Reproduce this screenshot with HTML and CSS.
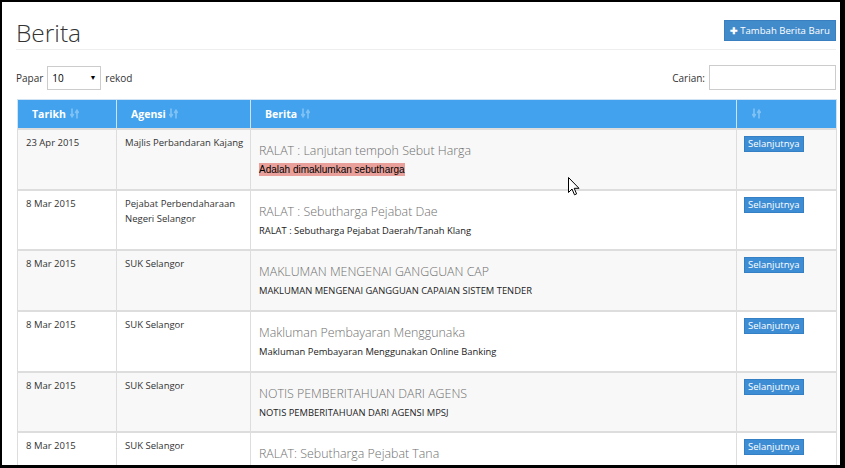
FILE: index.html
```html
<!DOCTYPE html>
<html>
<head>
<meta charset="utf-8">
<link rel="stylesheet" href="styles.css">
</head>
<body>
<div class="frame">
  <div class="page-header">
    <h1 class="title">Berita</h1>
    <button class="btn-add"><span class="plus">✚</span>Tambah Berita Baru</button>
  </div>
  <div class="toolbar">
    <label class="length">Papar <span class="select">10 <span class="caret">▼</span></span> rekod</label>
    <label class="search">Carian: <span class="input"></span></label>
  </div>
  <table class="grid">
    <colgroup>
      <col class="c1"><col class="c2"><col class="c3"><col class="c4">
    </colgroup>
    <thead>
      <tr>
        <th>Tarikh <svg class="sort" width="9" height="11" viewBox="0 0 9 11"><path d="M2 0.5v7.5M0.3 6l1.7 2.8 1.7-2.8M7 10.5v-7.5M5.3 5l1.7-2.8 1.7 2.8" fill="none" stroke="#80c2f4" stroke-width="1.6"/></svg></th>
        <th>Agensi <svg class="sort" width="9" height="11" viewBox="0 0 9 11"><path d="M2 0.5v7.5M0.3 6l1.7 2.8 1.7-2.8M7 10.5v-7.5M5.3 5l1.7-2.8 1.7 2.8" fill="none" stroke="#80c2f4" stroke-width="1.6"/></svg></th>
        <th>Berita <svg class="sort" width="9" height="11" viewBox="0 0 9 11"><path d="M2 0.5v7.5M0.3 6l1.7 2.8 1.7-2.8M7 10.5v-7.5M5.3 5l1.7-2.8 1.7 2.8" fill="none" stroke="#80c2f4" stroke-width="1.6"/></svg></th>
        <th><svg class="sort" width="9" height="11" viewBox="0 0 9 11"><path d="M2 0.5v7.5M0.3 6l1.7 2.8 1.7-2.8M7 10.5v-7.5M5.3 5l1.7-2.8 1.7 2.8" fill="none" stroke="#80c2f4" stroke-width="1.6"/></svg></th>
      </tr>
    </thead>
    <tbody>
      <tr class="odd">
        <td>23 Apr 2015</td>
        <td>Majlis Perbandaran Kajang</td>
        <td><div class="news-title">RALAT : Lanjutan tempoh Sebut Harga</div><div class="news-sub"><span class="hl">Adalah dimaklumkan sebutharga</span></div></td>
        <td class="act"><span class="btn-more">Selanjutnya</span></td>
      </tr>
      <tr>
        <td>8 Mar 2015</td>
        <td>Pejabat Perbendaharaan Negeri Selangor</td>
        <td><div class="news-title">RALAT : Sebutharga Pejabat Dae</div><div class="news-sub">RALAT : Sebutharga Pejabat Daerah/Tanah Klang</div></td>
        <td class="act"><span class="btn-more">Selanjutnya</span></td>
      </tr>
      <tr class="odd">
        <td>8 Mar 2015</td>
        <td>SUK Selangor</td>
        <td><div class="news-title">MAKLUMAN MENGENAI GANGGUAN CAP</div><div class="news-sub">MAKLUMAN MENGENAI GANGGUAN CAPAIAN SISTEM TENDER</div></td>
        <td class="act"><span class="btn-more">Selanjutnya</span></td>
      </tr>
      <tr>
        <td>8 Mar 2015</td>
        <td>SUK Selangor</td>
        <td><div class="news-title">Makluman Pembayaran Menggunaka</div><div class="news-sub">Makluman Pembayaran Menggunakan Online Banking</div></td>
        <td class="act"><span class="btn-more">Selanjutnya</span></td>
      </tr>
      <tr class="odd">
        <td>8 Mar 2015</td>
        <td>SUK Selangor</td>
        <td><div class="news-title">NOTIS PEMBERITAHUAN DARI AGENS</div><div class="news-sub">NOTIS PEMBERITAHUAN DARI AGENSI MPSJ</div></td>
        <td class="act"><span class="btn-more">Selanjutnya</span></td>
      </tr>
      <tr>
        <td>8 Mar 2015</td>
        <td>SUK Selangor</td>
        <td><div class="news-title">RALAT: Sebutharga Pejabat Tana</div><div class="news-sub">&nbsp;</div></td>
        <td class="act"><span class="btn-more">Selanjutnya</span></td>
      </tr>
    </tbody>
  </table>
  <svg class="cursor" width="12" height="19" viewBox="0 0 12 19"><path d="M0.5 0.5 L0.5 15.5 L4 12 L6.5 17.8 L8.6 16.9 L6.2 11.3 L11 11.3 Z" fill="#fff" stroke="#000" stroke-width="1"/></svg>
</div>
</body>
</html>
```
FILE: styles.css
```css
html, body { margin: 0; padding: 0; }
body { background: #000; font-family: "Open Sans", "Liberation Sans", sans-serif; color: #333; }
.frame {
  position: relative;
  margin: 2px 5px 0 2px;
  height: 463px;
  background: #fff;
  padding: 0 4px 0 14px;
  overflow: hidden;
}
.page-header {
  display: flex;
  justify-content: space-between;
  align-items: flex-start;
  border-bottom: 1px solid #eee;
  height: 47px;
}
.title {
  margin: 16px 0 0 0;
  font-size: 24.5px;
  font-weight: 300;
  line-height: 30px;
  color: #333;
}
.btn-add {
  margin-top: 18px;
  height: 21px;
  width: 112px;
  padding: 0;
  border: 1px solid #3a7fc0;
  background: #428bca;
  color: #fff;
  font-family: "Open Sans", sans-serif;
  font-size: 9.6px;
  display: flex;
  align-items: center;
  justify-content: center;
  gap: 2px;
}
.plus { font-size: 9px; font-weight: bold; }
.toolbar {
  display: flex;
  justify-content: space-between;
  align-items: center;
  height: 25px;
  margin-top: 15px;
  font-size: 10px;
}
.length, .search { display: flex; align-items: center; gap: 4px; }
.select {
  display: inline-flex;
  justify-content: space-between;
  align-items: center;
  width: 54px;
  height: 24px;
  border: 1px solid #ccc;
  padding: 0 4px;
  box-sizing: border-box;
  color: #000;
  font-size: 10px;
}
.caret { font-size: 7px; }
.input {
  display: inline-block;
  width: 127px;
  height: 25px;
  border: 1px solid #ccc;
  box-sizing: border-box;
}
.grid {
  margin-top: 9px;
  margin-left: 1px;
  width: 819px;
  border-collapse: collapse;
  table-layout: fixed;
  font-size: 9.5px;
}
.c1 { width: 99px; }
.c2 { width: 134px; }
.c3 { width: 486px; }
.c4 { width: 100px; }
.grid th, .grid td {
  border: 1px solid #ddd;
  text-align: left;
  vertical-align: top;
}
.grid th {
  background: #42a2ed;
  color: #fff;
  font-weight: bold;
  font-size: 10.5px;
  height: 28px;
  padding: 0 0 0 14px;
  vertical-align: middle;
  border-color: #cfe3f5 #cfe3f5 #ddd #cfe3f5;
}
.sort { vertical-align: -1px; margin-left: 1px; }
.grid td {
  height: 60.7px;
  padding: 5px 3px 0 8px;
  line-height: 15px;
  border-width: 2px 1px 0 1px;
  box-sizing: border-box;
}
.grid td.act { padding-left: 7px; padding-top: 4px; }
.grid tr.odd td { background: #f8f8f8; }
.news-title {
  margin-top: 7px;
  font-size: 12.4px;
  font-weight: 300;
  color: #6f6f6f;
  line-height: 17px;
}
.news-sub { margin-top: 3px; font-size: 9.4px; color: #222; }
.hl {
  background: #e9a09b;
  color: #000;
  font-family: "Liberation Sans", Arial, sans-serif;
  font-size: 10px;
  padding: 1px 0;
}
.btn-more {
  display: inline-block;
  margin-top: 2px;
  background: #3d8dd5;
  color: #fff;
  border: 1px solid #3580c4;
  font-size: 9.5px;
  line-height: 14px;
  padding: 0 3px;
}
.cursor { position: absolute; left: 566px; top: 175px; }
```
